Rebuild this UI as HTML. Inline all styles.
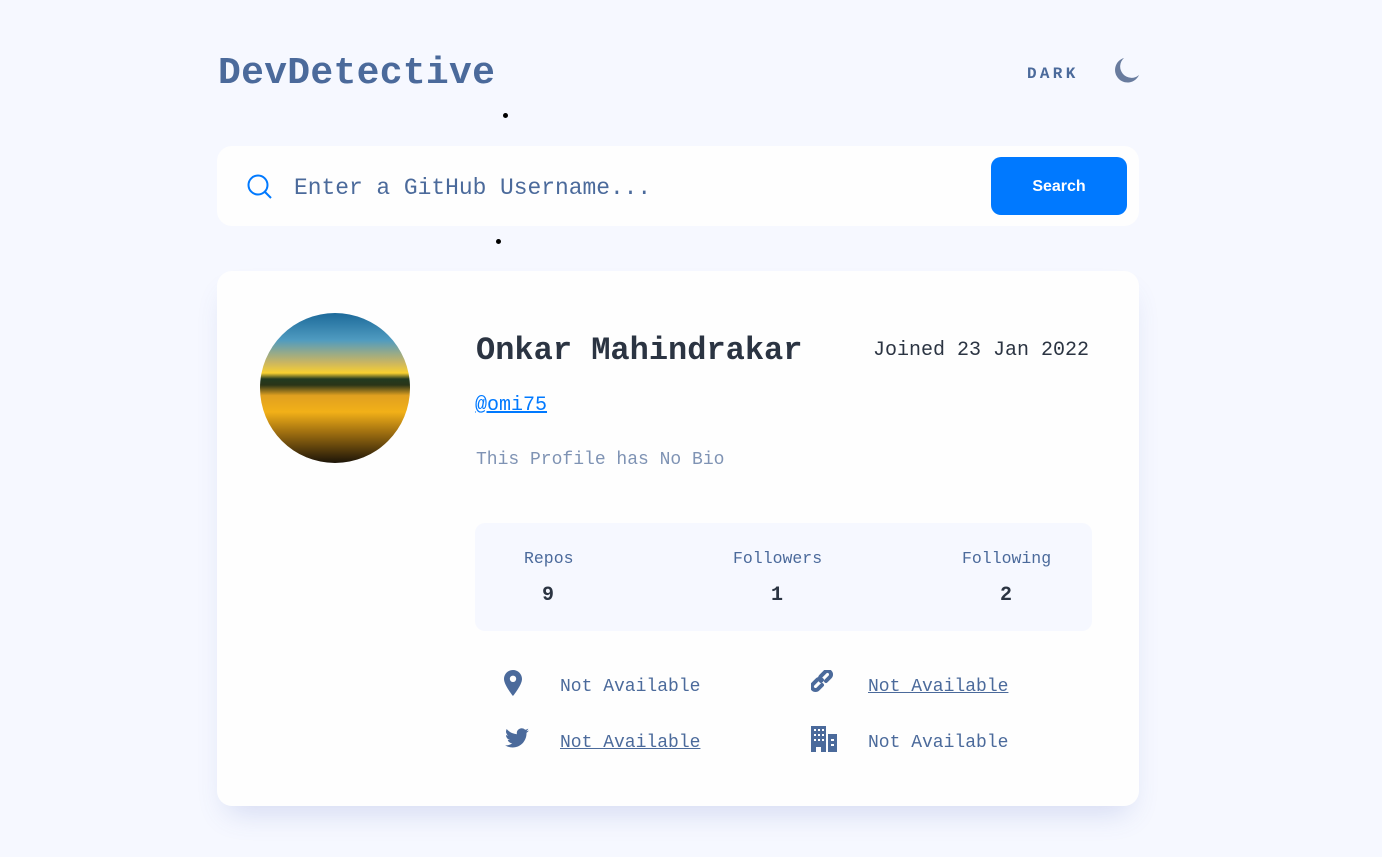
<!DOCTYPE html>
<html><head><meta charset="utf-8"><style>
*{margin:0;padding:0;box-sizing:border-box}
body{width:1382px;height:857px;background:#f6f8ff;font-family:"Liberation Mono",monospace;color:#4b6a9b;position:relative;overflow:hidden}
.abs{position:absolute;white-space:nowrap}
.logo{left:218px;top:52px;font-size:38px;font-weight:bold;color:#4b6a9b;letter-spacing:0.3px}
.dark{left:1027px;top:65px;font-size:16px;font-weight:bold;letter-spacing:3.3px;color:#4b6a9b}
.search{left:217px;top:146px;width:922px;height:80px;background:#fefefe;border-radius:15px}
.btn{left:991px;top:157px;width:136px;height:58px;background:#0079ff;border-radius:10px;color:#fff;font-family:"Liberation Sans",sans-serif;font-weight:bold;font-size:16px;text-align:center;line-height:60px}
.ph{left:294px;top:175px;font-size:22.9px;color:#4b6a9b}
.card{left:217px;top:271px;width:922px;height:535px;background:#fefefe;border-radius:15px;box-shadow:0 16px 30px -10px rgba(70,96,187,0.2)}
.av{left:260px;top:313px;width:150px;height:150px;border-radius:50%;overflow:hidden;background:linear-gradient(180deg,#1d6a9a 0%,#4f9bc0 18%,#c9b562 33%,#f8d030 40%,#223a20 44%,#2a3518 48%,#e0a020 55%,#f2b018 66%,#9d6d10 80%,#1c1408 100%)}
.name{left:476px;top:332px;font-size:32px;font-weight:bold;color:#2b3442}
.join{left:873px;top:339px;font-size:20px;color:#2b3442}
.user{left:475px;top:394px;font-size:20px;color:#0079ff;text-decoration:underline}
.bio{left:476px;top:450px;font-size:18px;color:#7f93b4}
.stats{left:475px;top:523px;width:617px;height:108px;background:#f6f8ff;border-radius:10px}
.sl{font-size:16.5px;color:#4b6a9b;top:549px}
.sv{font-size:20px;font-weight:bold;color:#2b3442;top:584px}
.na{font-size:18px;color:#4b6a9b}
.u{text-decoration:underline}
.dot{width:5px;height:5px;border-radius:50%;background:#000}
</style></head><body>
<div class="abs logo">DevDetective</div>
<div class="abs dark">DARK</div>
<svg class="abs" style="left:1113px;top:57px" width="27" height="27" viewBox="0 0 27 27"><path d="M11 1 A12.5 12.5 0 1 0 26 18 A11 11 0 0 1 11 1Z" fill="#697c9e"/></svg>
<div class="abs dot" style="left:503px;top:113px"></div>
<div class="abs search"></div>
<svg class="abs" style="left:246px;top:173px" width="27" height="27" viewBox="0 0 27 27"><circle cx="12" cy="12" r="9.5" fill="none" stroke="#0079ff" stroke-width="2"/><path d="M19 19l6 6" stroke="#0079ff" stroke-width="2"/></svg>
<div class="abs ph">Enter a GitHub Username...</div>
<div class="abs btn">Search</div>
<div class="abs dot" style="left:496px;top:239px"></div>
<div class="abs card"></div>
<div class="abs av"></div>
<div class="abs name">Onkar Mahindrakar</div>
<div class="abs join">Joined 23 Jan 2022</div>
<div class="abs user">@omi75</div>
<div class="abs bio">This Profile has No Bio</div>
<div class="abs stats"></div>
<div class="abs sl" style="left:524px">Repos</div>
<div class="abs sl" style="left:733px">Followers</div>
<div class="abs sl" style="left:962px">Following</div>
<div class="abs sv" style="left:542px">9</div>
<div class="abs sv" style="left:771px">1</div>
<div class="abs sv" style="left:1000px">2</div>
<svg class="abs" style="left:504px;top:670px" width="18" height="26" viewBox="0 0 18 26"><path d="M9 0C4 0 0 4 0 9c0 6 9 17 9 17s9-11 9-17c0-5-4-9-9-9zm0 12a3.2 3.2 0 1 1 0-6.4A3.2 3.2 0 0 1 9 12z" fill="#4b6a9b"/></svg>
<div class="abs na" style="left:560px;top:677px">Not Available</div>
<svg class="abs" style="left:811px;top:670px" width="26" height="26" viewBox="0 0 26 26"><g fill="none" stroke="#4b6a9b" stroke-width="4" stroke-linecap="round"><path d="M11 15l-4 4a3.5 3.5 0 0 1-5-5l4-4a3.5 3.5 0 0 1 5 0"/><path d="M15 11l4-4a3.5 3.5 0 0 0-5-5l-4 4a3.5 3.5 0 0 0 0 5"/></g></svg>
<div class="abs na u" style="left:868px;top:677px">Not Available</div>
<svg class="abs" style="left:505px;top:728px" width="25" height="21" viewBox="0 0 25 21"><path d="M24 2.5c-.9.4-1.8.6-2.8.8 1-.6 1.800-1.6 2.1-2.7-1 .6-2 1-3.1 1.2A4.9 4.9 0 0 0 11.9 6.2 13.9 13.9 0 0 1 1.7 1a4.9 4.9 0 0 0 1.5 6.6c-.8 0-1.600-.3-2.2-.6 0 2.4 1.7 4.4 3.9 4.8-.7.2-1.5.2-2.2.1.6 2 2.4 3.4 4.6 3.4A9.9 9.9 0 0 1 0 17.3 14 14 0 0 0 7.5 19.5c9 0 14-7.5 14-14v-.6c1-.7 1.8-1.6 2.5-2.4z" fill="#4b6a9b"/></svg>
<div class="abs na u" style="left:560px;top:733px">Not Available</div>
<svg class="abs" style="left:811px;top:726px" width="27" height="26" viewBox="0 0 27 26"><path d="M0 0h15v26H10v-5H5v5H0z" fill="#4b6a9b"/><path d="M17 8h9v18h-9z" fill="#4b6a9b"/><g fill="#fff"><rect x="3" y="3" width="2" height="2"/><rect x="7" y="3" width="2" height="2"/><rect x="11" y="3" width="2" height="2"/><rect x="3" y="8" width="2" height="2"/><rect x="7" y="8" width="2" height="2"/><rect x="11" y="8" width="2" height="2"/><rect x="3" y="13" width="2" height="2"/><rect x="7" y="13" width="2" height="2"/><rect x="11" y="13" width="2" height="2"/><rect x="20" y="13" width="3" height="2"/><rect x="20" y="18" width="3" height="2"/></g></svg>
<div class="abs na" style="left:868px;top:733px">Not Available</div>
</body></html>
